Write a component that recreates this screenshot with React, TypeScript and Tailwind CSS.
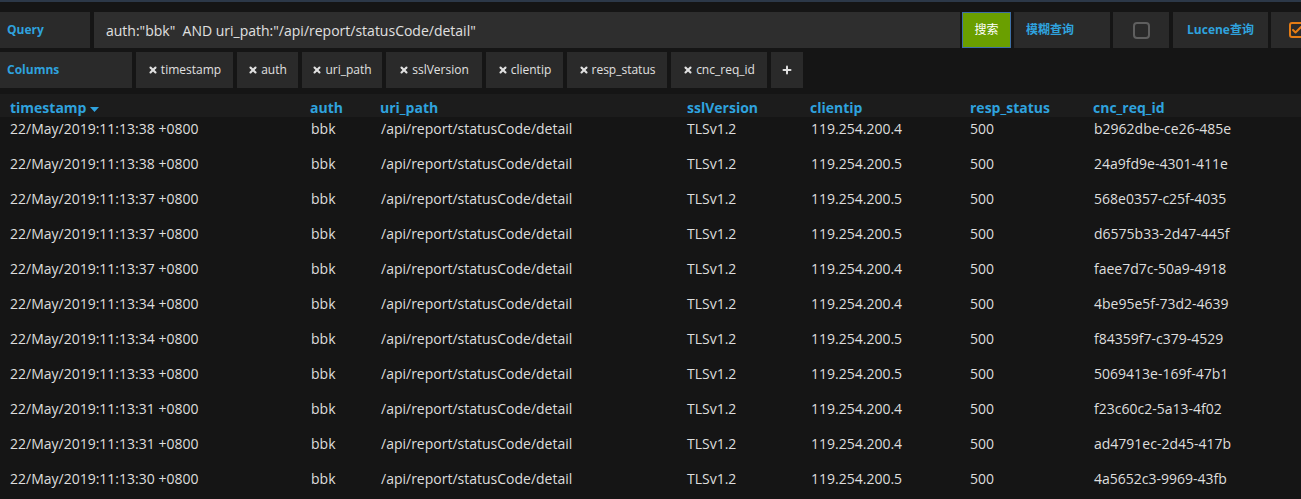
import { Check, X, Plus } from 'lucide-react'

const columns = [
  { name: 'timestamp', w: 'w-[97px]' },
  { name: 'auth', w: 'w-[61px]' },
  { name: 'uri_path', w: 'w-[80px]' },
  { name: 'sslVersion', w: 'w-[96px]' },
  { name: 'clientip', w: 'w-[77px]' },
  { name: 'resp_status', w: 'w-[100px]' },
  { name: 'cnc_req_id', w: 'w-[96px]' },
]

const rows = [
  ['22/May/2019:11:13:38 +0800', '119.254.200.4', 'b2962dbe-ce26-485e'],
  ['22/May/2019:11:13:38 +0800', '119.254.200.5', '24a9fd9e-4301-411e'],
  ['22/May/2019:11:13:37 +0800', '119.254.200.5', '568e0357-c25f-4035'],
  ['22/May/2019:11:13:37 +0800', '119.254.200.5', 'd6575b33-2d47-445f'],
  ['22/May/2019:11:13:37 +0800', '119.254.200.4', 'faee7d7c-50a9-4918'],
  ['22/May/2019:11:13:34 +0800', '119.254.200.4', '4be95e5f-73d2-4639'],
  ['22/May/2019:11:13:34 +0800', '119.254.200.5', 'f84359f7-c379-4529'],
  ['22/May/2019:11:13:33 +0800', '119.254.200.5', '5069413e-169f-47b1'],
  ['22/May/2019:11:13:31 +0800', '119.254.200.4', 'f23c60c2-5a13-4f02'],
  ['22/May/2019:11:13:31 +0800', '119.254.200.4', 'ad4791ec-2d45-417b'],
  ['22/May/2019:11:13:30 +0800', '119.254.200.5', '4a5652c3-9969-43fb'],
]

const font = "font-['Open_Sans','Noto_Sans_CJK_SC',sans-serif]"
const grid = 'grid grid-cols-[310px_70px_307px_123px_160px_123px_1fr]'

export default function App() {
  return (
    <div className={`h-[499px] w-full overflow-hidden bg-[#151515] ${font}`}>
      <div className="h-[2px] bg-[#2c3848]" />

      <div className="flex flex-col gap-[4px] pt-[10px]">
        <div className="flex h-[36px] overflow-hidden text-[12px] font-bold text-[#2fa2de]">
          <div className="flex w-[90px] shrink-0 items-center bg-[#2a2a2a] pl-[7px]">Query</div>
          <div className="ml-[4px] flex w-[866px] shrink-0 items-center bg-[#2e2e2e] pl-[12px] text-[14px] font-normal text-[#e0e0e0]">
            auth:"bbk"&nbsp; AND uri_path:"/api/report/statusCode/detail"
          </div>
          <div className="ml-[2px] flex w-[49px] shrink-0 items-center justify-center border border-[#3e6fa6] bg-[#6a9f00] text-[12px] font-normal text-white">
            搜索
          </div>
          <div className="ml-[3px] flex w-[96px] shrink-0 items-center bg-[#2a2a2a] pl-[12px]">模糊查询</div>
          <div className="ml-[3px] flex w-[56px] shrink-0 items-center justify-center bg-[#2a2a2a]">
            <div className="h-[17px] w-[17px] rounded-[4px] border-2 border-[#5f5f5f]" />
          </div>
          <div className="ml-[4px] flex w-[95px] shrink-0 items-center justify-center bg-[#2a2a2a]">Lucene查询</div>
          <div className="ml-[3px] flex w-[60px] shrink-0 items-center bg-[#2a2a2a] pl-[18px]">
            <div className="flex h-[16px] w-[16px] items-center justify-center rounded-[3px] border-2 border-[#e57c14]">
              <Check className="h-[12px] w-[12px] text-[#e57c14]" strokeWidth={4} />
            </div>
          </div>
        </div>

        <div className="flex h-[36px] gap-[4px] text-[12px]">
          <div className="flex w-[132px] shrink-0 items-center bg-[#2a2a2a] pl-[7px] font-bold text-[#2fa2de]">Columns</div>
          {columns.map((c) => (
            <div key={c.name} className={`flex ${c.w} shrink-0 items-center justify-center gap-[3px] bg-[#2a2a2a] text-[#e0e0e0]`}>
              <X className="h-[10px] w-[10px]" strokeWidth={5} />
              {c.name}
            </div>
          ))}
          <div className="flex w-[32px] shrink-0 items-center justify-center bg-[#2a2a2a] text-[#e0e0e0]">
            <Plus className="h-[12px] w-[12px]" strokeWidth={4} />
          </div>
        </div>
      </div>

      <div className={`mt-[6px] h-[23px] ${grid} items-end bg-[#1c1c1c] pb-[2px] text-[14px] leading-[14px] font-bold text-[#2fa2de]`}>
        <div className="flex items-center gap-[4px] pl-[10px]">
          timestamp
          <svg width="9" height="5" viewBox="0 0 9 5" className="mt-[2px]">
            <polygon points="0,0 9,0 4.5,5" fill="#2fa2de" />
          </svg>
        </div>
        <div>auth</div>
        <div>uri_path</div>
        <div>sslVersion</div>
        <div>clientip</div>
        <div>resp_status</div>
        <div>cnc_req_id</div>
      </div>

      <div className="overflow-hidden">
        <div className="-mt-[6px]">
          {rows.map((r, i) => (
            <div key={i} className={`${grid} h-[35px] items-center text-[14px] text-[#dedede]`}>
              <div className="pl-[10px]">{r[0]}</div>
              <div className="pl-[1px]">bbk</div>
              <div className="pl-[1px]">/api/report/statusCode/detail</div>
              <div>TLSv1.2</div>
              <div className="pl-[1px]">{r[1]}</div>
              <div>500</div>
              <div className="pl-[1px]">{r[2]}</div>
            </div>
          ))}
        </div>
      </div>
    </div>
  )
}
